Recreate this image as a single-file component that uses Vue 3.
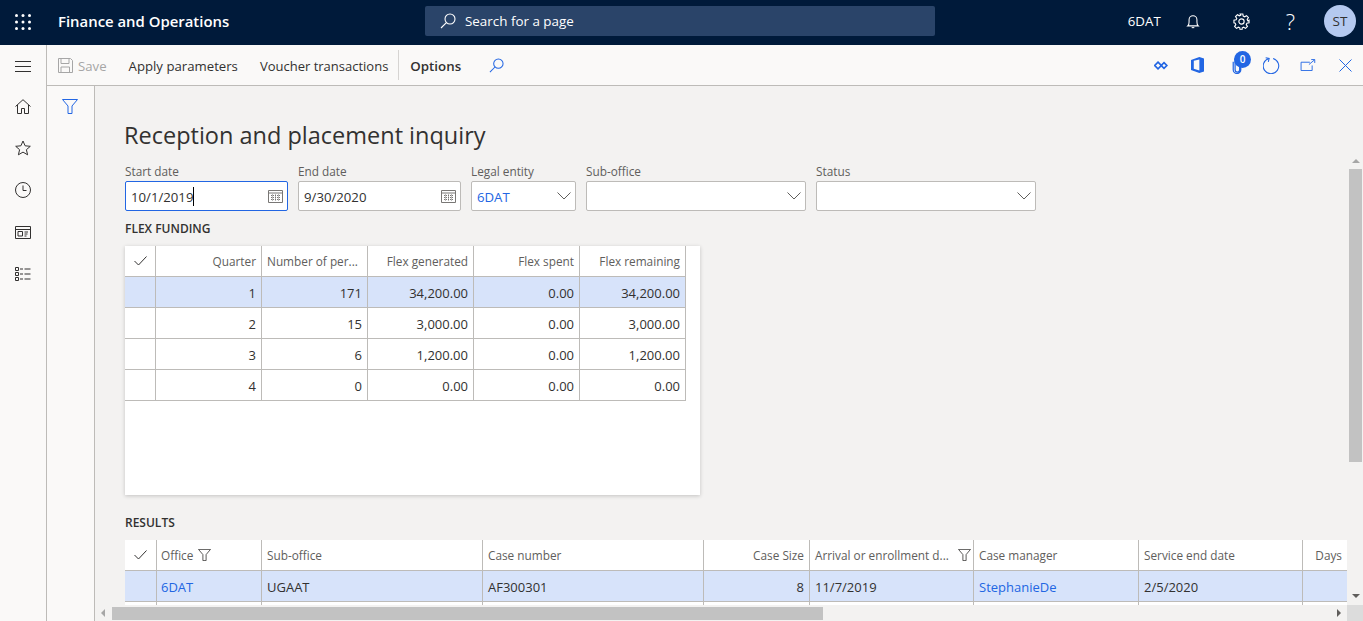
<template>
  <div class="shell">
    <header class="topbar">
      <svg class="waffle" width="16" height="16" viewBox="0 0 16 16">
        <g fill="#fff">
          <template v-for="y in [1.5, 8, 14.5]" :key="y">
            <circle v-for="x in [1.5, 8, 14.5]" :key="x" :cx="x" :cy="y" r="1.5" />
          </template>
        </g>
      </svg>
      <div class="app-name">Finance and Operations</div>
      <div class="searchbox">
        <svg width="16" height="16" viewBox="0 0 16 16" fill="none" stroke="#fff" stroke-width="1.1">
          <circle cx="10" cy="6" r="5" />
          <path d="M6.4 9.6 1 15" />
        </svg>
        <span>Search for a page</span>
      </div>
      <div class="top-right">
        <span class="company">6DAT</span>
        <svg class="bell" width="14" height="15" viewBox="0 0 16 17" fill="none" stroke="#fff" stroke-width="1.2">
          <path d="M2 13.5c1.2-1 1.5-2.500 1.500-4.500V6.500a4.500 4.500 0 0 1 9 0V9c0 2 .3 3.500 1.500 4.500z" />
          <path d="M6.500 15.500h3" />
        </svg>
        <svg class="gear" width="17" height="17" viewBox="0 0 18 18" fill="none" stroke="#fff" stroke-width="1.2">
          <circle cx="9" cy="9" r="2.800" />
          <path d="M7.600 1h2.800l.4 2.300 1.500.7 2-1.200 2 2-1.300 2 .7 1.400L17 7.600v2.800l-2.300.4-.7 1.500 1.300 2-2 2-2-1.300-1.500.7-.4 2.300H7.600l-.4-2.300-1.500-.7-2 1.300-2-2 1.300-2-.7-1.500L1 10.400V7.600l2.300-.4.700-1.400-1.300-2 2-2 2 1.200 1.500-.7z" />
        </svg>
        <span class="help">?</span>
        <span class="avatar">ST</span>
      </div>
    </header>

    <div class="workspace">
      <nav class="sidenav">
        <svg class="burger" width="16" height="11" viewBox="0 0 16 11" stroke="#323130" stroke-width="1">
          <path d="M0 .5h16M0 5.500h16M0 10.500h16" />
        </svg>
        <span class="nav-item">
          <svg width="16" height="15" viewBox="0 0 16 15" fill="none" stroke="#323130">
            <path d="M.5 7.500 8 .7l7.500 6.800M2.500 6v8.500h4v-5h3v5h4V6" />
          </svg>
        </span>
        <span class="nav-item">
          <svg width="16" height="16" viewBox="0 0 16 16" fill="none" stroke="#323130">
            <path d="m8 1 2.100 4.800 5.200.5-3.900 3.400 1.200 5.100L8 12.100l-4.600 2.700 1.200-5.100L.7 6.300l5.200-.5z" />
          </svg>
        </span>
        <span class="nav-item">
          <svg width="16" height="16" viewBox="0 0 16 16" fill="none" stroke="#323130">
            <circle cx="8" cy="8" r="7.500" />
            <path d="M8 3.500v5h3.500" />
          </svg>
        </span>
        <span class="nav-item">
          <svg width="16" height="13" viewBox="0 0 16 13" fill="none" stroke="#323130">
            <path d="M.5.500h15v12H.5zM.5 3.500h15M3 5.500h4.500v4.500H3zM9.500 6h3.500M9.500 8h3M9.500 10h2" />
          </svg>
        </span>
        <span class="nav-item">
          <svg width="16" height="14" viewBox="0 0 16 14" fill="none" stroke="#323130">
            <path d="M.5.500h3v3h-3zM.5 5.500h3v3h-3zM.5 10.500h3v3h-3zM5 2h3M9.500 2H15.500M5 7h3M9.500 7h6M5 12h3M9.500 12h6" />
          </svg>
        </span>
      </nav>

      <div class="page">
        <div class="cmdbar">
          <svg class="save-icon" width="15" height="15" viewBox="0 0 15 15" fill="none" stroke="#a6a6a6">
            <path d="M.5.500h12l2 2v12H.5zM3 .500v5h8v-5M3 14.500V9h8.500v5.500" />
          </svg>
          <span class="cmd disabled">Save</span>
          <span class="cmd apply">Apply parameters</span>
          <span class="cmd voucher">Voucher transactions</span>
          <span class="cmd-sep"></span>
          <span class="cmd options">Options</span>
          <svg class="cmd-search" width="15" height="15" viewBox="0 0 16 16" fill="none" stroke="#2266e3" stroke-width="1.100">
            <circle cx="10" cy="6" r="5" />
            <path d="M6.400 9.600 1 15" />
          </svg>
          <div class="cmd-right">
            <svg class="ic-links" width="14" height="9" viewBox="0 0 14 9" fill="none" stroke="#2266e3" stroke-width="1.700">
              <path d="M4 1.200 7.300 4.500 4 7.800.7 4.500z" />
              <path d="M10 1.700 12.800 4.500 10 7.300 7.200 4.500z" />
            </svg>
            <svg class="ic-office" width="13" height="16" viewBox="0 0 14 17" fill="#2266e3">
              <path fill-rule="evenodd" d="M0 3 9 0l5 1.500v14L9 17l-9-3zM9 2.500 3 4v8.500l6 2z" />
            </svg>
            <div class="clip">
              <svg width="10" height="17" viewBox="0 0 10 18" fill="none" stroke="#2266e3" stroke-width="1.300">
                <path d="M3 4.500v9a2.400 2.400 0 0 0 4.800 0V3.500a2.500 2.500 0 0 0-5-.5M1 5v8.500a4 4 0 0 0 8 0V5" />
              </svg>
              <span class="badge">0</span>
            </div>
            <svg class="ic-refresh" width="17" height="17" viewBox="0 0 16 16" fill="none" stroke="#2266e3">
              <path d="M5.500 1.400a7.300 7.300 0 1 0 4 0" />
              <path d="M2.500 .8 5.800 1.400 5 4.500" />
            </svg>
            <svg class="ic-open" width="16" height="12" viewBox="0 0 16 13" fill="none" stroke="#2266e3">
              <path d="M10 3.500H.5v9h12V7" />
              <path d="m9 6 6-5M11.500.6h3.800v3.700" />
            </svg>
            <svg class="ic-close" width="13" height="13" viewBox="0 0 13 13" fill="none" stroke="#2266e3">
              <path d="m.5.500 12 12M12.500.500l-12 12" />
            </svg>
          </div>
        </div>

        <div class="below">
          <div class="filterpane">
            <svg width="16" height="15" viewBox="0 0 16 15" fill="none" stroke="#2266e3">
              <path d="M.5.500h15L10 7v7.500H6V7z" />
            </svg>
          </div>
          <div class="contentwrap">
            <h1 class="title">Reception and placement inquiry</h1>
            <div class="scroll-row">
              <main class="content">
                <div class="filters">
                  <div v-for="f in filters" :key="f.label" class="field" :style="{ width: f.width + 'px' }">
                    <label>{{ f.label }}</label>
                    <div class="input" :class="{ focused: f.focused }">
                      <span class="value" :class="{ link: f.link }">{{ f.value }}</span>
                      <span v-if="f.focused" class="caret"></span>
                      <svg v-if="f.type === 'date'" class="cal" width="15" height="14" viewBox="0 0 15 14" fill="none" stroke="#797775">
                        <path d="M.5 1.500h14v12H.5zM.5 4h14" />
                        <path d="M3 6.500h9M3 8.500h9M3 10.500h9M4.500 5.500v6.500M7.500 5.500v6.500M10.500 5.500v6.500" stroke-dasharray="1 1" />
                      </svg>
                      <svg v-else class="chev" width="14" height="8" viewBox="0 0 14 8" fill="none" stroke="#605e5c">
                        <path d="m.5.500 6.500 6.500 6.500-6.500" />
                      </svg>
                    </div>
                  </div>
                </div>

                <h2 class="section first">FLEX FUNDING</h2>
                <div class="flex-card">
                  <table class="grid flex-grid">
                    <thead>
                      <tr>
                        <th class="chk">
                          <svg width="13" height="10" viewBox="0 0 13 10" fill="none" stroke="#323130"><path d="m.5 5 4 4 8-8.500" /></svg>
                        </th>
                        <th v-for="h in flexHeads" :key="h.name" :class="{ num: !h.left }">{{ h.name }}</th>
                      </tr>
                    </thead>
                    <tbody>
                      <tr v-for="(r, i) in flexRows" :key="i" :class="{ selected: i === 0 }">
                        <td class="chk"></td>
                        <td v-for="(c, j) in r" :key="j" class="num">{{ c }}</td>
                      </tr>
                    </tbody>
                  </table>
                </div>

                <h2 class="section">RESULTS</h2>
                <table class="grid results-grid">
                  <colgroup>
                    <col style="width: 32px" />
                    <col v-for="c in resultCols" :key="c.name" :style="{ width: c.width + 'px' }" />
                  </colgroup>
                  <thead>
                    <tr>
                      <th class="chk">
                        <svg width="13" height="10" viewBox="0 0 13 10" fill="none" stroke="#323130"><path d="m.5 5 4 4 8-8.500" /></svg>
                      </th>
                      <th v-for="c in resultCols" :key="c.name" :class="{ num: c.num }">
                        <span class="head-inner">
                          <span class="head-text">{{ c.name }}</span>
                          <svg v-if="c.filtered" class="head-filter" :class="{ tail: c.tail }" width="13" height="12" viewBox="0 0 16 15" fill="none" stroke="#323130">
                            <path d="M.5.500h15L10 7v7.500H6V7z" />
                          </svg>
                        </span>
                      </th>
                    </tr>
                  </thead>
                  <tbody>
                    <tr class="selected">
                      <td class="chk"></td>
                      <td v-for="c in resultCols" :key="c.name" :class="{ num: c.num, link: c.link }">{{ c.value }}</td>
                    </tr>
                    <tr>
                      <td class="chk"></td>
                      <td v-for="c in resultCols" :key="c.name"></td>
                    </tr>
                  </tbody>
                </table>
              </main>
              <div class="vscroll">
                <span class="arrow up"></span>
                <span class="vthumb"></span>
                <span class="arrow down"></span>
              </div>
            </div>
            <div class="hscroll">
              <span class="arrow left"></span>
              <span class="htrack"><span class="hthumb"></span></span>
              <span class="arrow right"></span>
              <span class="corner"></span>
            </div>
          </div>
        </div>
      </div>
    </div>
  </div>
</template>

<script setup>
const filters = [
  { label: "Start date", value: "10/1/2019", width: 163, type: "date", focused: true },
  { label: "End date", value: "9/30/2020", width: 163, type: "date" },
  { label: "Legal entity", value: "6DAT", width: 105, type: "select", link: true },
  { label: "Sub-office", value: "", width: 220, type: "select" },
  { label: "Status", value: "", width: 220, type: "select" },
];

const flexHeads = [
  { name: "Quarter" },
  { name: "Number of per...", left: true },
  { name: "Flex generated" },
  { name: "Flex spent" },
  { name: "Flex remaining" },
];

const flexRows = [
  ["1", "171", "34,200.00", "0.00", "34,200.00"],
  ["2", "15", "3,000.00", "0.00", "3,000.00"],
  ["3", "6", "1,200.00", "0.00", "1,200.00"],
  ["4", "0", "0.00", "0.00", "0.00"],
];

const resultCols = [
  { name: "Office", width: 105, value: "6DAT", link: true, filtered: true },
  { name: "Sub-office", width: 221, value: "UGAAT" },
  { name: "Case number", width: 221, value: "AF300301" },
  { name: "Case Size", width: 106, value: "8", num: true },
  { name: "Arrival or enrollment d...", width: 164, value: "11/7/2019", filtered: true, tail: true },
  { name: "Case manager", width: 165, value: "StephanieDe", link: true },
  { name: "Service end date", width: 164, value: "2/5/2020" },
  { name: "Days", width: 44, value: "", num: true },
];
</script>

<style>
html,
body {
  margin: 0;
  overflow: hidden;
}
</style>

<style scoped>
.shell {
  display: flex;
  flex-direction: column;
  width: 1363px;
  height: 621px;
  overflow: hidden;
  background: #f3f2f1;
  color: #323130;
  font-family: "Open Sans", "Noto Sans", sans-serif;
  font-size: 11.8px;
}

.topbar {
  display: flex;
  align-items: center;
  flex: 0 0 45px;
  box-sizing: border-box;
  padding-bottom: 3px;
  background: #001a3a;
  color: #fff;
}

.waffle {
  margin: 2px 0 0 15px;
}

.app-name {
  width: 367px;
  margin-left: 27px;
  font-size: 14.9px;
  font-weight: 600;
}

.searchbox {
  display: flex;
  align-items: center;
  gap: 9px;
  width: 510px;
  height: 30px;
  padding-left: 15px;
  box-sizing: border-box;
  background: #2a4469;
  border-radius: 2px;
  font-size: 13.4px;
}

.top-right {
  display: flex;
  align-items: center;
  margin-left: auto;
  padding-right: 7px;
}

.company {
  font-size: 13.3px;
}

.bell {
  margin-left: 25px;
}

.gear {
  margin-left: 33px;
}

.help {
  margin-left: 36px;
  font-size: 22px;
  font-weight: 300;
}

.avatar {
  display: flex;
  align-items: center;
  justify-content: center;
  width: 32px;
  height: 32px;
  margin-left: 29px;
  border-radius: 50%;
  background: #b4c9f0;
  color: #323130;
  font-size: 13.5px;
}

.workspace {
  display: flex;
  flex: 1;
  min-height: 0;
}

.sidenav {
  display: flex;
  flex-direction: column;
  align-items: center;
  flex: 0 0 46px;
  padding-top: 16px;
  background: #faf9f8;
  border-right: 1px solid #bdbbb8;
}

.burger {
  flex: none;
  margin-bottom: 13px;
}

.nav-item {
  display: flex;
  align-items: center;
  justify-content: center;
  flex: 0 0 42px;
}

.page {
  display: flex;
  flex-direction: column;
  flex: 1;
  min-width: 0;
}

.cmdbar {
  display: flex;
  align-items: center;
  flex: 0 0 40px;
  background: #faf9f8;
  border-bottom: 1px solid #bdbbb8;
  font-size: 13.2px;
}

.cmd {
  padding-top: 2px;
}

.save-icon {
  margin-left: 11px;
}

.cmd.disabled {
  margin-left: 5px;
  color: #a6a6a6;
}

.apply {
  margin-left: 22px;
}

.voucher {
  margin-left: 22px;
  font-size: 13px;
}

.cmd-sep {
  width: 1px;
  height: 30px;
  margin-left: 10px;
  background: #d6d4d2;
}

.options {
  margin-left: 11px;
  font-size: 13.3px;
  font-weight: 600;
}

.cmd-search {
  margin-left: 28px;
}

.cmd-right {
  display: flex;
  align-items: center;
  margin-left: auto;
  padding-right: 11px;
}

.ic-office {
  margin-left: 23px;
}

.clip {
  position: relative;
  display: flex;
  margin-left: 28px;
}

.badge {
  position: absolute;
  top: -6px;
  left: 2px;
  width: 17px;
  height: 17px;
  border-radius: 50%;
  background: #2266e3;
  color: #fff;
  font-size: 10px;
  font-weight: 600;
  line-height: 16px;
  text-align: center;
}

.ic-refresh {
  margin-left: 21px;
}

.ic-open {
  margin-left: 20px;
}

.ic-close {
  margin-left: 23px;
}

.below {
  display: flex;
  flex: 1;
  min-height: 0;
}

.filterpane {
  flex: 0 0 48px;
  box-sizing: border-box;
  padding: 13px 0 0 15px;
  background: #faf9f8;
  border-right: 1px solid #bdbbb8;
}

.contentwrap {
  display: flex;
  flex-direction: column;
  flex: 1;
  min-width: 0;
}

.title {
  flex: 0 0 69px;
  box-sizing: border-box;
  margin: 0;
  padding: 34px 0 0 29px;
  font-size: 23.5px;
  font-weight: 400;
  line-height: 30px;
}

.scroll-row {
  display: flex;
  flex: 1;
  min-height: 0;
}

.content {
  flex: 1;
  min-width: 0;
  padding-left: 30px;
  overflow: hidden;
}

.filters {
  display: flex;
  gap: 10px;
  margin-top: 8px;
}

.field label {
  display: block;
  height: 18px;
  color: #605e5c;
  line-height: 16px;
}

.input {
  display: flex;
  align-items: center;
  box-sizing: border-box;
  height: 30px;
  padding: 0 4px 0 5px;
  background: #fff;
  border: 1px solid #bdbbb8;
  border-radius: 2px;
  font-size: 13.2px;
}

.input.focused {
  border-color: #2266e3;
}

.value {
  padding-top: 2px;
}

.caret {
  width: 1px;
  height: 19px;
  background: #000;
}

.value.link {
  color: #2266e3;
}

.cal,
.chev {
  margin-left: auto;
}

.section {
  margin: 20px 0 9px;
  font-size: 12px;
  font-weight: 600;
  line-height: 16px;
}

.section.first {
  margin-top: 10px;
}

.flex-card {
  box-sizing: border-box;
  width: 575px;
  height: 249px;
  background: #fff;
  box-shadow: 0 1px 4px rgba(0, 0, 0, 0.2);
}

.grid {
  border-collapse: separate;
  border-spacing: 0;
  table-layout: fixed;
}

.flex-grid {
  width: 561px;
}

.results-grid {
  width: 1222px;
  background: #fff;
}

.grid th,
.grid td {
  box-sizing: border-box;
  height: 31px;
  padding: 0 5px;
  border-right: 1px solid #bdbbb8;
  border-bottom: 1px solid #bdbbb8;
  white-space: nowrap;
  overflow: hidden;
  text-align: left;
}

.grid th {
  color: #605e5c;
  font-size: 11.8px;
  font-weight: 400;
  background: #fff;
}

.grid td {
  padding-top: 2px;
  font-size: 13px;
}

.grid .num {
  text-align: right;
}

.flex-grid .chk {
  width: 31px;
}

.results-grid th:nth-child(2),
.results-grid td:nth-child(2) {
  padding-left: 4px;
}

.results-grid th:last-child,
.results-grid td:last-child {
  border-right: 0;
}

.grid th.chk,
.grid td.chk {
  padding: 0;
  text-align: center;
}

.grid tr.selected td {
  background: #d7e3fa;
}

.grid td.link {
  color: #2266e3;
}

.head-inner {
  display: flex;
  align-items: center;
  gap: 5px;
}

.num .head-inner {
  justify-content: flex-end;
}

.head-filter {
  flex-shrink: 0;
}

.head-filter.tail {
  margin-left: auto;
  margin-right: -3px;
}

.vscroll {
  display: flex;
  flex-direction: column;
  align-items: center;
  flex: 0 0 16px;
}

.vthumb {
  align-self: stretch;
  height: 293px;
  margin: 6px 1px 0 2px;
  background: #c2c2c2;
}

.hscroll {
  display: flex;
  align-items: center;
  flex: 0 0 16px;
}

.htrack {
  flex: 1;
  align-self: flex-end;
  height: 13px;
  margin: 0 0 1px 7px;
}

.hthumb {
  display: block;
  width: 711px;
  height: 13px;
  background: #c2c2c2;
}

.corner {
  align-self: stretch;
  width: 16px;
  background: #dcdcdc;
}

.arrow {
  width: 0;
  height: 0;
  border-style: solid;
}

.arrow.up {
  margin: 4px 0 0 1px;
  border-width: 0 4px 4px;
  border-color: transparent transparent #a6a6a6;
}

.arrow.down {
  margin: auto 0 7px 1px;
  border-width: 4px 4px 0;
  border-color: #605e5c transparent transparent;
}

.arrow.left {
  margin-left: 6px;
  border-width: 4px 4px 4px 0;
  border-color: transparent #a6a6a6 transparent transparent;
}

.arrow.right {
  margin-right: 6px;
  border-width: 4px 0 4px 4px;
  border-color: transparent transparent transparent #605e5c;
}
</style>
